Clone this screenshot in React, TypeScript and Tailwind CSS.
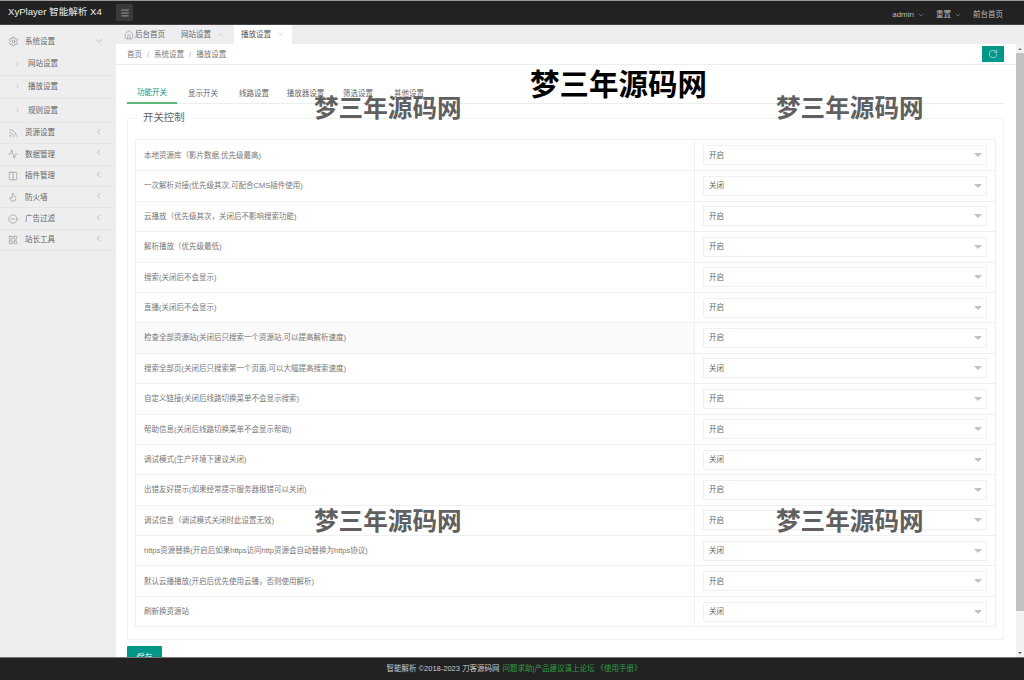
import { Activity, ChevronDown, ChevronLeft, ChevronRight, CircleMinus, Columns2, Flame, House, LayoutGrid, Menu, RotateCw, Rss, Settings, X } from 'lucide-react';
import type { LucideIcon } from 'lucide-react';

const subMenu = ['网站设置', '播放设置', '规则设置'];

const menu: { icon: LucideIcon; label: string }[] = [
  { icon: Rss, label: '资源设置' },
  { icon: Activity, label: '数据管理' },
  { icon: Columns2, label: '插件管理' },
  { icon: Flame, label: '防火墙' },
  { icon: CircleMinus, label: '广告过滤' },
  { icon: LayoutGrid, label: '站长工具' },
];

const tabs = [
  { label: '功能开关', width: 'w-[50px]', active: true },
  { label: '显示开关', width: 'w-[52px]' },
  { label: '线路设置', width: 'w-[50px]' },
  { label: '播放器设置', width: 'w-[53px]' },
  { label: '筛选设置', width: 'w-[52px]' },
  { label: '其他设置', width: 'w-[50px]' },
];

const rows = [
  ['本地资源库（影片数据,优先级最高)', '开启'],
  ['一次解析对接(优先级其次,可配合CMS插件使用)', '关闭'],
  ['云播放（优先级其次，关闭后不影响搜索功能)', '开启'],
  ['解析播放（优先级最低)', '开启'],
  ['搜索(关闭后不会显示)', '开启'],
  ['直播(关闭后不会显示)', '开启'],
  ['检查全部资源站(关闭后只搜索一个资源站,可以提高解析速度)', '开启'],
  ['搜索全部页(关闭后只搜索第一个页面,可以大幅提高搜索速度)', '关闭'],
  ['自定义链接(关闭后线路切换菜单不会显示搜索)', '开启'],
  ['帮助信息(关闭后线路切换菜单不会显示帮助)', '开启'],
  ['调试模式(生产环境下建议关闭)', '关闭'],
  ['出错友好提示(如果经常提示服务器报错可以关闭)', '开启'],
  ['调试信息（调试模式关闭时此设置无效)', '开启'],
  ['https资源替换(开启后如果https访问http资源会自动替换为https协议)', '关闭'],
  ['默认云播播放(开启后优先使用云播，否则使用解析)', '开启'],
  ['刷新换资源站', '关闭'],
];

function Watermark({ className }: { className: string }) {
  return (
    <div className={`absolute whitespace-nowrap font-bold leading-none ${className}`}>梦三年源码网</div>
  );
}

function Sidebar() {
  return (
    <aside className="w-[116px] shrink-0 bg-[#eeeeee] text-[#666]">
      <div className="flex h-[27px] items-center pl-[8px] pt-[6px]">
        <Settings size={11} strokeWidth={1.2} className="text-[#777]" />
        <span className="ml-[6px]">系统设置</span>
        <ChevronDown size={10} strokeWidth={1.2} className="ml-[39px] -mt-[2px] text-[#888]" />
      </div>
      {subMenu.map(label => (
        <div key={label} className="flex h-[23.6px] items-center border-b border-[#e6e6e6] pl-[14px]">
          <ChevronRight size={7} strokeWidth={1.4} className="text-[#888]" />
          <span className="ml-[7px]">{label}</span>
        </div>
      ))}
      {menu.map(({ icon: Icon, label }) => (
        <div key={label} className="flex h-[21.4px] items-center border-b border-[#e6e6e6] pl-[8px]">
          <Icon size={10} strokeWidth={1.2} className="text-[#777]" />
          <span className="ml-[7px] w-[69px]">{label}</span>
          <ChevronLeft size={9} strokeWidth={1.2} className="-mt-[3px] text-[#888]" />
        </div>
      ))}
    </aside>
  );
}

function FormRow({ label, value, index }: { label: string; value: string; index: number }) {
  return (
    <div className={`flex h-[30.4px] border-[#f0f0f0] ${index > 0 ? 'border-t' : ''}`}>
      <div className={`flex w-[559px] items-center border-r border-[#f0f0f0] pl-[8px] text-[#777] ${index === 6 ? 'bg-[#fafafa]' : ''}`}>
        {label}
      </div>
      <div className="flex flex-1 items-center px-[8px]">
        <div className="flex h-[20px] w-full items-center justify-between border border-[#f0f0f0] bg-white pl-[5px] pr-[4px] text-[#666]">
          {value}
          <span className="h-0 w-0 border-x-[4px] border-t-[4px] border-x-transparent border-t-[#c2c2c2]" />
        </div>
      </div>
    </div>
  );
}

export default function App() {
  return (
    <div className="relative flex h-[680px] w-[1024px] flex-col overflow-hidden bg-white text-[7.5px] font-['Liberation_Sans','Noto_Sans_CJK_SC',sans-serif]">
      <header className="flex h-[25px] shrink-0 items-center border-y border-t-[#999] border-b-[#444] bg-[#222222] text-[#bbb]">
        <div className="w-[116px] pl-[8px] text-[9.6px] text-[#eee]">XyPlayer 智能解析 X4</div>
        <button className="flex h-[17px] w-[17px] items-center justify-center rounded-[2px] bg-[#3a3a3a] text-[#ddd]">
          <Menu size={10} strokeWidth={1.4} />
        </button>
        <div className="ml-auto flex items-center pr-[21px] pt-[5px]">
          <span className="text-[8px]">admin</span>
          <ChevronDown size={8} strokeWidth={1.3} className="ml-[3px]" />
          <span className="ml-[11px]">重置</span>
          <ChevronDown size={8} strokeWidth={1.3} className="ml-[3px]" />
          <span className="ml-[11px]">前台首页</span>
        </div>
      </header>

      <div className="flex min-h-0 flex-1">
        <Sidebar />
        <div className="flex min-w-0 flex-1 flex-col">
          <div className="flex h-[19px] shrink-0 items-stretch bg-[#eeeef0] pl-[8px] text-[#666]">
            <div className="flex w-[49px] items-center">
              <House size={10} strokeWidth={1} className="mr-[1px]" />
              后台首页
            </div>
            <div className="flex w-[61px] items-center pl-[8px]">
              网站设置
              <X size={7} strokeWidth={1} className="ml-[6px] text-[#aaa]" />
            </div>
            <div className="flex w-[58px] items-center bg-white pl-[7px] text-[#555]">
              播放设置
              <X size={7} strokeWidth={1} className="ml-[6px] text-[#aaa]" />
            </div>
          </div>

          <div className="flex min-h-0 flex-1">
            <main className="min-w-0 flex-1 overflow-hidden">
              <div className="flex h-[21px] items-center justify-between border-b border-[#eeeeee] pl-[11px] pr-[12px] text-[#777]">
                <div className="flex gap-[5px] pt-[1px]">
                  <span>首页</span>
                  <span className="text-[#aaa]">/</span>
                  <span>系统设置</span>
                  <span className="text-[#aaa]">/</span>
                  <span>播放设置</span>
                </div>
                <button className="flex h-[16px] w-[22px] items-center justify-center bg-[#009688] text-white">
                  <RotateCw size={10} strokeWidth={1.3} />
                </button>
              </div>

              <div className="px-[11px] pt-[17px]">
                <div className="mr-[1px] flex h-[22px] border-b border-[#eeeeee] text-[#666]">
                  {tabs.map(tab => (
                    <div
                      key={tab.label}
                      className={`flex h-[22px] items-center justify-center whitespace-nowrap pt-[1px] ${tab.width} ${tab.active ? 'border-b-[2px] border-[#5FB878] text-[#009688]' : ''}`}
                    >
                      {tab.label}
                    </div>
                  ))}
                </div>

                <fieldset className="mr-[1px] mt-[7px] h-[529px] border border-[#f2f2f2] px-[7px] pt-[14px]">
                  <legend className="ml-[2px] px-[6px] text-[10.4px] leading-[14px] text-[#666]">开关控制</legend>
                  <div className="border border-[#f0f0f0]">
                    {rows.map(([label, value], index) => (
                      <FormRow key={label} label={label} value={value} index={index} />
                    ))}
                  </div>
                </fieldset>

                <button className="mt-[6px] h-[24px] w-[35px] rounded-[1px] bg-[#009688] text-[8px] text-white">保存</button>
              </div>
            </main>

            <div className="flex w-[8px] shrink-0 flex-col bg-[#f1f1f1]">
              <div className="flex h-[9px] items-center justify-center">
                <span className="h-0 w-0 border-x-[2px] border-b-[2px] border-x-transparent border-b-[#777]" />
              </div>
              <div className="h-[558px] bg-[#c1c1c1]" />
              <div className="mt-auto flex h-[9px] items-center justify-center">
                <span className="h-0 w-0 border-x-[2px] border-t-[2px] border-x-transparent border-t-[#555]" />
              </div>
            </div>
          </div>
        </div>
      </div>

      <footer className="flex h-[23px] shrink-0 items-center justify-center border-t border-[#777] bg-[#222222] pl-[4px] text-[#ccc]">
        智能解析 ©2018-2023 刀客源码网
        <span className="ml-[3px] text-[#2f9e44]">问题求助|产品建议请上论坛 《使用手册》</span>
      </footer>

      <Watermark className="left-[530px] top-[70px] text-[29.5px] text-black" />
      <Watermark className="left-[314px] top-[97px] text-[24.6px] text-[#606060]" />
      <Watermark className="left-[776px] top-[97px] text-[24.6px] text-[#606060]" />
      <Watermark className="left-[314px] top-[510px] text-[24.6px] text-[#606060]" />
      <Watermark className="left-[776px] top-[510px] text-[24.6px] text-[#606060]" />
    </div>
  );
}
